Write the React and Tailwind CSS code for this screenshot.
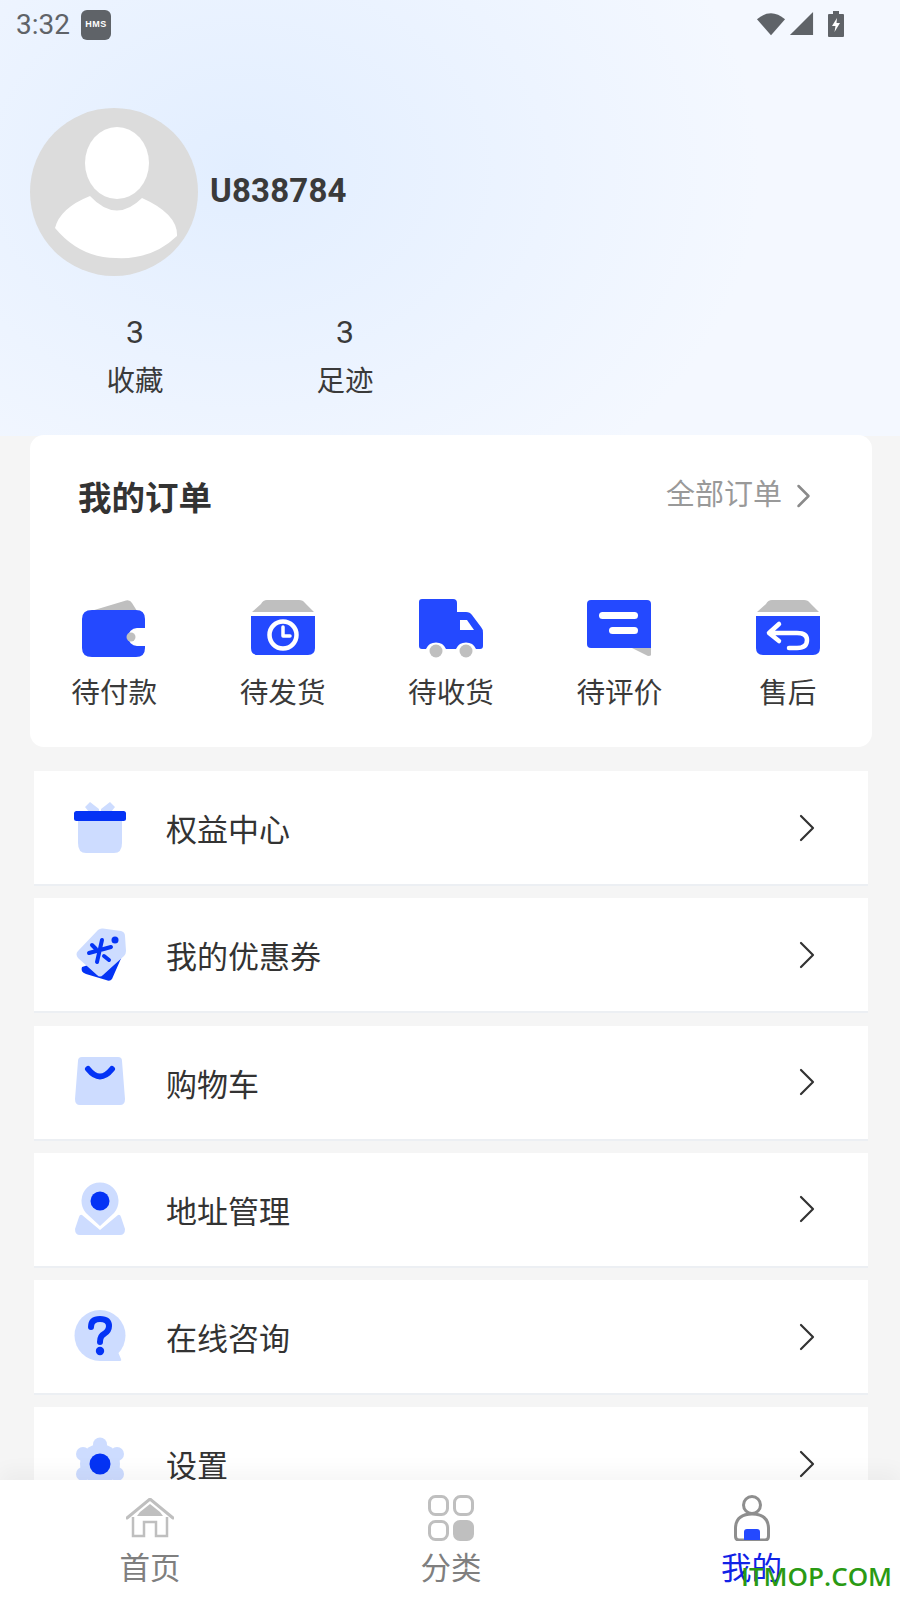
import React from "react";

const BLUE = "#2449ff";
const DEEP = "#0433f5";
const PALE = "#cddcff";
const GREY = "#bfbfbf";

const Chevron = ({ c = "#333", w = 2.4, cls = "" }) => (
  <svg viewBox="0 0 18 28" className={cls} fill="none">
    <path d="M3 2 L15 14 L3 26" stroke={c} strokeWidth={w} strokeLinecap="round" strokeLinejoin="round" />
  </svg>
);

const Wallet = () => (
  <svg viewBox="0 0 66 62" className="w-[66px] h-[62px]">
    <path d="M10 13 L45 2.5 Q49 1.5 51 5 L56 13 Z" fill={GREY} />
    <path d="M11 12 H55 Q64 12 64 21 V30 H56 A9 9 0 0 0 56 48 H64 V50 Q64 59 55 59 H11 Q1 59 1 50 V21 Q1 12 11 12 Z" fill={BLUE} />
    <circle cx="50" cy="39" r="4.5" fill={GREY} />
  </svg>
);

const BoxTop = () => <path d="M11 6 Q13 2 17 2 H49 Q53 2 55 5 L64 14 H2 Z" fill={GREY} />;

const BoxClock = () => (
  <svg viewBox="0 0 66 62" className="w-[66px] h-[62px]">
    <BoxTop />
    <path d="M1 18 H65 V50 Q65 57 58 57 H8 Q1 57 1 50 Z" fill={BLUE} />
    <circle cx="33" cy="37" r="13.5" fill="none" stroke="#fff" strokeWidth="4.5" />
    <path d="M33 29 V38 H40" fill="none" stroke="#fff" strokeWidth="3.5" strokeLinecap="round" strokeLinejoin="round" />
  </svg>
);

const Truck = () => (
  <svg viewBox="0 0 66 62" className="w-[66px] h-[62px]">
    <path d="M4 1 H35 Q39 1 39 5 V14 H48 Q52 14 54 17 L63 29 Q65 31 65 35 V48 Q65 51 62 51 H58 A11 11 0 0 0 38 51 H28 A11 11 0 0 0 8 51 H4 Q1 51 1 48 V4 Q1 1 4 1 Z" fill={BLUE} />
    <path d="M42 22 H49 L56 32 H42 Z" fill="#fff" />
    <circle cx="18" cy="53" r="6.5" fill={GREY} />
    <circle cx="48" cy="53" r="6.5" fill={GREY} />
  </svg>
);

const Message = () => (
  <svg viewBox="0 0 66 62" className="w-[66px] h-[62px]">
    <path d="M46 50 H65 V57 Q65 58 62 58 Z" fill={GREY} />
    <path d="M5 2 H61 Q65 2 65 6 V50 H5 Q1 50 1 46 V6 Q1 2 5 2 Z" fill={BLUE} />
    <rect x="13" y="14" width="39" height="7" rx="3.5" fill="#fff" />
    <rect x="23" y="29" width="29" height="7" rx="3.5" fill="#fff" />
  </svg>
);

const BoxReturn = () => (
  <svg viewBox="0 0 66 62" className="w-[66px] h-[62px]">
    <BoxTop />
    <path d="M1 18 H65 V50 Q65 57 58 57 H8 Q1 57 1 50 Z" fill={BLUE} />
    <path d="M24 26 L14 35 L24 43 M15 35 H42 Q52 35 52 42 Q52 50 42 50 H34" fill="none" stroke="#fff" strokeWidth="4.5" strokeLinecap="round" strokeLinejoin="round" />
  </svg>
);

const Gift = () => (
  <svg viewBox="0 0 54 54" className="w-[54px] h-[54px]">
    <path d="M17 1 L26 8 V11 H16 L12 6 Z M37 1 L28 8 V11 H38 L42 6 Z" fill={PALE} />
    <path d="M5 16 H49 V42 Q49 52 41 52 H13 Q5 52 5 42 Z" fill={PALE} />
    <rect x="1" y="10" width="52" height="10" rx="2.5" fill={DEEP} />
  </svg>
);

const Tag = () => (
  <svg viewBox="0 0 54 54" className="w-[54px] h-[54px]">
    <path d="M9 39 L50 26 L39 51 Q37 54 33 52 L13 46 Q7 44 9 39 Z" fill={DEEP} />
    <path d="M5 23 L25 2 Q27 0 30 0.5 L48 3 Q52 4 52 8 L53 23 Q53 26 51 28 L30 47 Q27 50 24 47 L5 30 Q2 26 5 23 Z" fill={PALE} />
    <circle cx="42" cy="12" r="3.5" fill={DEEP} />
    <path d="M29 12 L24 34 M16 25 L38 19 M19 17 L23 21 M31 28 L36 32" stroke={DEEP} strokeWidth="4" strokeLinecap="round" fill="none" />
  </svg>
);

const Bag = () => (
  <svg viewBox="0 0 54 54" className="w-[54px] h-[54px]">
    <path d="M9 2 H45 Q49 2 49 6 L52 44 Q52 50 47 50 H7 Q2 50 2 44 L5 6 Q5 2 9 2 Z" fill={PALE} />
    <path d="M15 14 Q27 29 39 14" fill="none" stroke={DEEP} strokeWidth="6" strokeLinecap="round" />
  </svg>
);

const Pin = () => (
  <svg viewBox="0 0 54 54" className="w-[54px] h-[54px]">
    <path d="M9 33 L27 48 L45 33 Q47 32 48 35 L52 47 Q52 53 47 53 H7 Q2 53 2 47 L6 35 Q7 32 9 33 Z" fill={PALE} />
    <path d="M27 44 L13 31 A18.5 18.5 0 1 1 41 31 Z" fill={PALE} />
    <circle cx="27" cy="19" r="9.5" fill={DEEP} />
  </svg>
);

const Help = () => (
  <svg viewBox="0 0 54 54" className="w-[54px] h-[54px]">
    <circle cx="27" cy="25.5" r="25.5" fill={PALE} />
    <path d="M30 40 L45 42 L48 49 Q49 51 46 51 H27 Z" fill={PALE} />
    <path d="M18 17 Q18 9 27 9 Q36 9 36 16 Q36 21 31 24 Q27 26 27 32" fill="none" stroke={DEEP} strokeWidth="6" strokeLinecap="round" />
    <circle cx="27" cy="41" r="4.2" fill={DEEP} />
  </svg>
);

const Gear = () => (
  <svg viewBox="0 0 54 54" className="w-[54px] h-[54px]">
    <circle cx="27" cy="27" r="20" fill={PALE} />
    <circle cx="27" cy="7.5" r="7" fill={PALE} />
    <circle cx="44" cy="17" r="7" fill={PALE} />
    <circle cx="44" cy="37" r="7" fill={PALE} />
    <circle cx="27" cy="46.5" r="7" fill={PALE} />
    <circle cx="10" cy="37" r="7" fill={PALE} />
    <circle cx="10" cy="17" r="7" fill={PALE} />
    <circle cx="27" cy="27" r="10.5" fill={DEEP} />
  </svg>
);

const orders = [
  [Wallet, "待付款"],
  [BoxClock, "待发货"],
  [Truck, "待收货"],
  [Message, "待评价"],
  [BoxReturn, "售后"],
];

const menu = [
  [Gift, "权益中心"],
  [Tag, "我的优惠券"],
  [Bag, "购物车"],
  [Pin, "地址管理"],
  [Help, "在线咨询"],
  [Gear, "设置"],
];

export default function App() {
  return (
    <div className="relative w-[900px] h-[1600px] overflow-hidden flex flex-col bg-[#f5f5f5] font-['Roboto','Noto_Sans_CJK_SC',sans-serif] text-[#333]">
      <div className="flex-1 min-h-0 overflow-hidden">
        <header className="h-[436px] flex flex-col bg-[radial-gradient(ellipse_520px_400px_at_240px_170px,#e2eeff_0%,#edf4ff_60%,#f4f8ff_100%)]">
          <div className="h-[50px] flex items-center pl-4 pr-[56px] text-[#5f6368]">
            <span className="text-[28px] leading-none">3:32</span>
            <span className="ml-[11px] w-[30px] h-[30px] rounded-[6px] bg-[#5f6368] text-white text-[9px] font-bold flex items-center justify-center tracking-[0.5px] font-['Liberation_Sans',sans-serif]">HMS</span>
            <div className="ml-auto mb-[3px] flex items-center gap-[3px]">
              <svg viewBox="0 0 32 26" className="w-[30px] h-[26px]">
                <path d="M1 8 Q16 -5 31 8 L16 25 Z" fill="#5f6368" />
              </svg>
              <svg viewBox="0 0 26 26" className="w-[25px] h-[25px]">
                <path d="M25 1 V25 H1 Z" fill="#5f6368" />
              </svg>
              <svg viewBox="0 0 16 26" className="ml-[11px] w-[16px] h-[26px]">
                <path d="M5 0 H11 V3 H15 Q16 3 16 4 V25 Q16 26 15 26 H1 Q0 26 0 25 V4 Q0 3 1 3 H5 Z" fill="#5f6368" />
                <path d="M9 7 L4 15 H7.5 L6.5 21 L12 12 H8.5 Z" fill="#fff" />
              </svg>
            </div>
          </div>
          <div className="mt-[58px] ml-[30px] flex items-center gap-[12px]">
            <svg viewBox="0 0 168 168" className="w-[168px] h-[168px]">
              <circle cx="84" cy="84" r="84" fill="#dcdcdc" />
              <ellipse cx="87" cy="55" rx="32" ry="36" fill="#fff" />
              <path d="M60 88 Q86 116 112 90 Q148 106 147 128 Q122 152 86 150 Q50 150 25 120 Q30 100 60 88 Z" fill="#fff" />
            </svg>
            <span className="relative -top-[1px] text-[33px] font-bold text-[#3a3a3a] tracking-[0.2px]">U838784</span>
          </div>
          <div className="mt-[35px] flex text-[#3a3a3a]">
            <div className="ml-[85px] w-[100px] flex flex-col items-center">
              <span className="text-[32px] leading-[42px]">3</span>
              <span className="text-[28.5px] leading-[58px]">收藏</span>
            </div>
            <div className="ml-[110px] w-[100px] flex flex-col items-center">
              <span className="text-[32px] leading-[42px]">3</span>
              <span className="text-[28.5px] leading-[58px]">足迹</span>
            </div>
          </div>
        </header>

        <section className="ml-[30px] w-[842px] -mt-[1px] h-[312px] rounded-[14px] bg-white flex flex-col">
          <div className="h-[162px] pt-[40px] pl-[48px] pr-[61px] flex items-start justify-between">
            <span className="text-[33.5px] leading-[48px] font-bold text-[#333]">我的订单</span>
            <div className="flex items-center h-[42px] text-[#999]">
              <span className="text-[29px]">全部订单</span>
              <Chevron c="#8a8a8a" w="3" cls="ml-[14px] w-[15px] h-[24px]" />
            </div>
          </div>
          <div className="grid grid-cols-5">
            {orders.map(([Icon, label]) => (
              <div key={label} className="flex flex-col items-center">
                <div className="h-[62px] mt-[1px]"><Icon /></div>
                <span className="mt-[13px] text-[28.6px] leading-[40px] text-[#3a3a3a]">{label}</span>
              </div>
            ))}
          </div>
        </section>

        <nav className="ml-[34px] w-[834px] mt-[24px] flex flex-col gap-[12.3px]">
          {menu.map(([Icon, label]) => (
            <div key={label} className="h-[115px] shrink-0 bg-white border-b-2 border-[#eceff3] flex items-center pl-[39px] pr-[52px]">
              <Icon />
              <span className="ml-[39px] text-[31px] leading-none text-[#333] relative top-[3px]">{label}</span>
              <Chevron c="#333" w="2.2" cls="ml-auto w-[18px] h-[28px]" />
            </div>
          ))}
        </nav>
      </div>

      <footer className="relative h-[120px] shrink-0 bg-white grid grid-cols-3 shadow-[0_-10px_18px_rgba(0,0,0,0.035)]">
        <div className="flex flex-col items-center pt-[18px]">
          <svg viewBox="0 0 48 40" className="w-[48px] h-[40px]" fill="none">
            <path d="M1 20 L24 1 L47 20" stroke={GREY} strokeWidth="3" strokeLinecap="round" strokeLinejoin="round" />
            <path d="M14 14 L24 6 L34 14 L37 18 H11 Z" fill={GREY} />
            <path d="M7 19 V38 H18 V24 H30 V38 H41 V19" stroke={GREY} strokeWidth="2.5" />
          </svg>
          <span className="mt-[14px] text-[30.5px] leading-[34px] text-[#7f7f7f]">首页</span>
        </div>
        <div className="flex flex-col items-center pt-[15px] pl-[2px]">
          <svg viewBox="0 0 46 46" className="w-[46px] h-[46px]" fill="none">
            <rect x="1.5" y="1.5" width="18" height="18" rx="6" stroke={GREY} strokeWidth="3" />
            <rect x="26.5" y="1.5" width="18" height="18" rx="6" stroke={GREY} strokeWidth="3" />
            <rect x="1.5" y="26.5" width="18" height="18" rx="6" stroke={GREY} strokeWidth="3" />
            <rect x="25" y="25" width="21" height="21" rx="7" fill={GREY} />
          </svg>
          <span className="mt-[11px] text-[30.5px] leading-[34px] text-[#7f7f7f]">分类</span>
        </div>
        <div className="flex flex-col items-center pt-[15px] pl-[3px]">
          <svg viewBox="0 0 36 46" className="w-[36px] h-[46px]" fill="none">
            <circle cx="18" cy="10" r="8.5" stroke="#8e8e8e" strokeWidth="3" />
            <path d="M18 19 Q34 19 34.5 33 V41 Q34.5 45 31 45 H5 Q1.5 45 1.5 41 V33 Q2 19 18 19 Z" stroke="#8e8e8e" strokeWidth="3" />
            <path d="M10 45 V37 Q10 34 13 34 H23 Q26 34 26 37 V45 Z" fill={BLUE} />
          </svg>
          <span className="mt-[11px] text-[30.5px] leading-[34px] text-[#1122e6]">我的</span>
        </div>
        <span className="absolute left-[741px] top-[80px] text-[26px] leading-[32px] font-semibold text-[#2a9a14] font-['Open_Sans',sans-serif]">ITMOP.COM</span>
      </footer>
    </div>
  );
}
